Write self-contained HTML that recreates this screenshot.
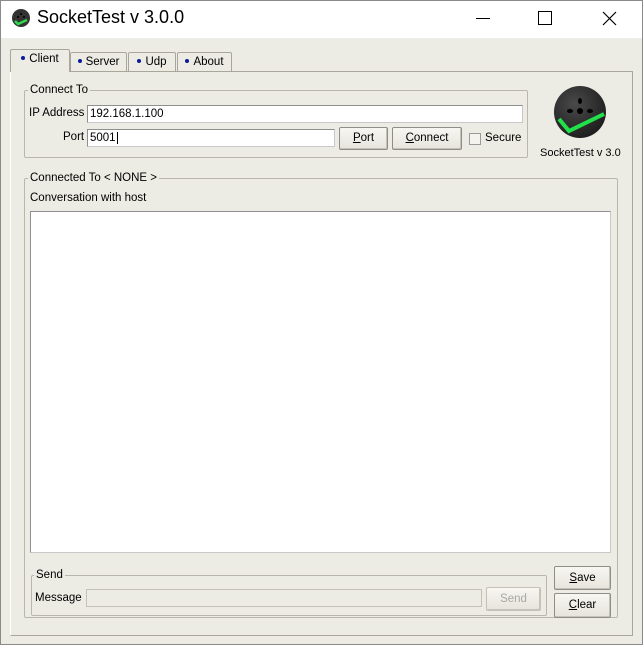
<!DOCTYPE html>
<html><head><style>
*{box-sizing:border-box;margin:0;padding:0}
body{width:643px;height:645px;background:#fff;font-family:"Liberation Sans",sans-serif;font-size:11.5px;color:#000;position:relative;overflow:hidden}
.a{position:absolute}
.win{left:0;top:0;width:643px;height:645px;border:1px solid #8a8a8a}
.client{left:1px;top:38px;width:641px;height:606px;background:#ecebe4}
.tab{border:1px solid #a9a79c;border-bottom:none;background:#ecebe4;text-align:center;line-height:18px;border-radius:2px 2px 0 0}
.dot{display:inline-block;width:4px;height:4px;border-radius:50%;background:#0c1a9c;vertical-align:middle;margin-right:4px;position:relative;top:-1px}
.grp{border:1px solid #b9b7ad;border-radius:2px}
.lg{background:#ecebe4;padding:0 2px;line-height:14px}
.inp{background:#fff;border:1px solid #8f8f8f;border-right-color:#c8c8c8;border-bottom-color:#c8c8c8}
.btn{border:1px solid #8f8e86;background:linear-gradient(#f7f6f2,#e6e4dc);text-align:center;line-height:20px;border-radius:2px;box-shadow:inset -1px -1px 0 #c5c3b9}
u{text-decoration:underline}
</style></head><body>
<div class="a win"></div>
<svg class="a" style="left:11px;top:8px" width="20" height="20" viewBox="0 0 20 20"><circle cx="10" cy="10" r="9" fill="#333"/><path d="M4 13l3 3 9-4" stroke="#2ed84a" stroke-width="2.5" fill="none"/><circle cx="10" cy="6" r="1" fill="#000"/><circle cx="7" cy="9" r="1" fill="#000"/><circle cx="13" cy="9" r="1" fill="#000"/></svg>
<div class="a" style="left:37px;top:7px;font-size:18px;">SocketTest v 3.0.0</div>
<div class="a" style="left:476px;top:18px;width:14px;height:1px;background:#000"></div>
<div class="a" style="left:538px;top:11px;width:14px;height:14px;border:1px solid #000"></div>
<svg class="a" style="left:602px;top:11px" width="15" height="15"><path d="M1 1L14 14M14 1L1 14" stroke="#000" stroke-width="1.2"/></svg>
<div class="a client"></div>
<div class="a" style="left:10px;top:71px;width:623px;height:565px;border:1px solid #a9a79c;border-top-color:#fff;border-left-color:#fff"></div>
<div class="a" style="left:10px;top:71px;width:623px;height:1px;background:#a9a79c"></div>
<div class="a tab" style="left:70px;top:52px;width:57px;height:19px"><span class="dot"></span>Server</div>
<div class="a tab" style="left:128px;top:52px;width:48px;height:19px"><span class="dot"></span>Udp</div>
<div class="a tab" style="left:177px;top:52px;width:55px;height:19px"><span class="dot"></span>About</div>
<div class="a tab" style="left:10px;top:49px;width:60px;height:23px;line-height:19px"><span class="dot"></span>Client</div>

<div class="a grp" style="left:24px;top:90px;width:504px;height:68px"></div>
<div class="a lg" style="left:28px;top:83px">Connect To</div>
<div class="a" style="left:29px;top:107px">IP Address</div>
<div class="a inp" style="left:87px;top:105px;width:436px;height:18px;padding-left:2px;line-height:16px">192.168.1.100</div>
<div class="a" style="left:63px;top:131px">Port</div>
<div class="a inp" style="left:87px;top:129px;width:248px;height:18px;padding-left:2px;line-height:16px">5001<span style="border-left:1px solid #000;margin-left:1px"></span></div>
<div class="a btn" style="left:339px;top:127px;width:49px;height:23px"><u>P</u>ort</div>
<div class="a btn" style="left:392px;top:127px;width:70px;height:23px"><u>C</u>onnect</div>
<div class="a" style="left:469px;top:133px;width:12px;height:12px;border:1px solid #9a9a9a;background:#f4f3ee"></div>
<div class="a" style="left:485px;top:132px">Secure</div>
<svg class="a" style="left:553px;top:85px" width="54" height="54" viewBox="0 0 54 54"><defs><radialGradient id="g" cx="40%" cy="35%" r="70%"><stop offset="0" stop-color="#4a4a4a"/><stop offset="1" stop-color="#1c1c1c"/></radialGradient></defs><circle cx="27" cy="27" r="26" fill="url(#g)"/><ellipse cx="27" cy="16" rx="2" ry="3" fill="#000"/><ellipse cx="17" cy="26" rx="3" ry="2" fill="#000"/><ellipse cx="37" cy="26" rx="3" ry="2" fill="#000"/><circle cx="27" cy="26" r="3" fill="#000"/><path d="M6 34l10 12 35-17" stroke="#22e04a" stroke-width="4" fill="none"/></svg>
<div class="a" style="left:540px;top:147px;font-size:11px">SocketTest v 3.0</div>

<div class="a grp" style="left:24px;top:178px;width:594px;height:440px"></div>
<div class="a lg" style="left:28px;top:171px">Connected To &lt; NONE &gt;</div>
<div class="a" style="left:30px;top:192px">Conversation with host</div>
<div class="a inp" style="left:30px;top:211px;width:581px;height:342px"></div>
<div class="a grp" style="left:31px;top:575px;width:516px;height:41px"></div>
<div class="a lg" style="left:34px;top:568px">Send</div>
<div class="a" style="left:35px;top:592px">Message</div>
<div class="a" style="left:86px;top:589px;width:396px;height:18px;border:1px solid #c3c1b8;background:#ecebe4"></div>
<div class="a btn" style="left:486px;top:587px;width:55px;height:24px;color:#a8a8a0;line-height:22px;border-color:#c3c1b8">Send</div>
<div class="a btn" style="left:554px;top:566px;width:57px;height:24px;line-height:22px"><u>S</u>ave</div>
<div class="a btn" style="left:554px;top:593px;width:57px;height:25px;line-height:23px"><u>C</u>lear</div>
</body></html>
